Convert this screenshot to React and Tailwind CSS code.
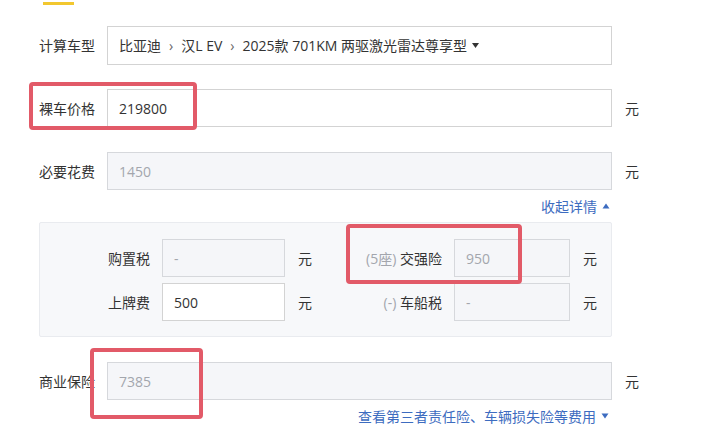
import React from "react";

const font = { fontFamily: '"Open Sans", "Noto Sans CJK SC", "Noto Sans", sans-serif' };

function Input({ value, disabled, w, grey }) {
  return (
    <div
      className={`flex h-[38px] items-center border px-[11px] text-[14px] ${w} ${
        disabled ? "border-[#d6d8dc] bg-[#f5f6f9]" : "border-[#d3d3d3] bg-white"
      } ${grey ? "text-[#a3a6ad]" : "text-[#333]"}`}
    >
      {value}
    </div>
  );
}

function Tri({ up, color }) {
  return (
    <svg width="8" height="6" viewBox="0 0 8 6" className="ml-[5px]">
      {up ? (
        <path d="M4 0.5 L7.5 5.5 L0.5 5.5 Z" fill={color} />
      ) : (
        <path d="M0.5 0.5 L7.5 0.5 L4 5.5 Z" fill={color} />
      )}
    </svg>
  );
}

export default function App() {
  return (
    <div
      className="relative h-[431px] w-[713px] overflow-hidden bg-white pl-[39px] text-[14px] text-[#333]"
      style={font}
    >
      <div className="ml-[4px] mt-[2px] h-[3px] w-[31px] bg-[#f2c72f]" />

      {/* 计算车型 */}
      <div className="mt-[21px] flex items-center">
        <div className="w-[68px]">计算车型</div>
        <div className="flex h-[39px] w-[505px] items-center whitespace-pre border border-[#d3d3d3] px-[11px]">
          <span>比亚迪</span>
          <span className="mx-[8px] text-[#666]">›</span>
          <span>汉L EV</span>
          <span className="mx-[8px] text-[#666]">›</span>
          <span>2025款 701KM 两驱激光雷达尊享型</span>
          <svg width="7" height="5" viewBox="0 0 7 5" className="ml-[5px]">
            <path d="M0 0 L7 0 L3.5 5 Z" fill="#333" />
          </svg>
        </div>
      </div>

      {/* 裸车价格 */}
      <div className="mt-[24px] flex items-center">
        <div className="w-[68px]">裸车价格</div>
        <Input value="219800" w="w-[505px]" />
        <div className="ml-[13px]">元</div>
      </div>

      {/* 必要花费 */}
      <div className="mt-[25px] flex items-center">
        <div className="w-[68px]">必要花费</div>
        <Input value="1450" w="w-[505px]" disabled grey />
        <div className="ml-[13px]">元</div>
      </div>

      <div className="flex h-[32px] w-[573px] items-center justify-end pr-[2px] text-[#3d6cc0]">
        收起详情
        <Tri up color="#3d6cc0" />
      </div>

      {/* detail panel */}
      <div className="flex w-[573px] flex-col gap-[6px] rounded-[2px] border border-[#e9ebef] bg-[#f7f8fa] pb-[15px] pt-[16px]">
        <div className="flex items-center">
          <div className="w-[110px] text-right">购置税</div>
          <div className="ml-[12px]">
            <Input value="-" w="w-[123px]" disabled grey />
          </div>
          <div className="ml-[13px] w-[14px]">元</div>
          <div className="w-[130px] text-right">
            <span className="text-[#a3a6ad]">(5座)</span> 交强险
          </div>
          <div className="ml-[12px]">
            <Input value="950" w="w-[116px]" disabled grey />
          </div>
          <div className="ml-[13px]">元</div>
        </div>
        <div className="flex items-center">
          <div className="w-[110px] text-right">上牌费</div>
          <div className="ml-[12px]">
            <Input value="500" w="w-[123px]" />
          </div>
          <div className="ml-[13px] w-[14px]">元</div>
          <div className="w-[130px] text-right">
            <span className="text-[#a3a6ad]">(-)</span> 车船税
          </div>
          <div className="ml-[12px]">
            <Input value="-" w="w-[116px]" disabled grey />
          </div>
          <div className="ml-[13px]">元</div>
        </div>
      </div>

      {/* 商业保险 */}
      <div className="mt-[25px] flex items-center">
        <div className="w-[68px]">商业保险</div>
        <Input value="7385" w="w-[505px]" disabled grey />
        <div className="ml-[13px]">元</div>
      </div>

      <div className="flex h-[32px] w-[573px] items-center justify-end pr-[3px] text-[#3d6cc0]">
        查看第三者责任险、车辆损失险等费用
        <Tri color="#3d6cc0" />
      </div>

      {/* annotation boxes */}
      <div className="absolute left-[29px] top-[82px] h-[48px] w-[168px] rounded-[4px] border-4 border-[#e25a68]" />
      <div className="absolute left-[346px] top-[224px] h-[60px] w-[176px] rounded-[4px] border-4 border-[#e25a68]" />
      <div className="absolute left-[90px] top-[348px] h-[71px] w-[113px] rounded-[4px] border-4 border-[#e25a68]" />
    </div>
  );
}
